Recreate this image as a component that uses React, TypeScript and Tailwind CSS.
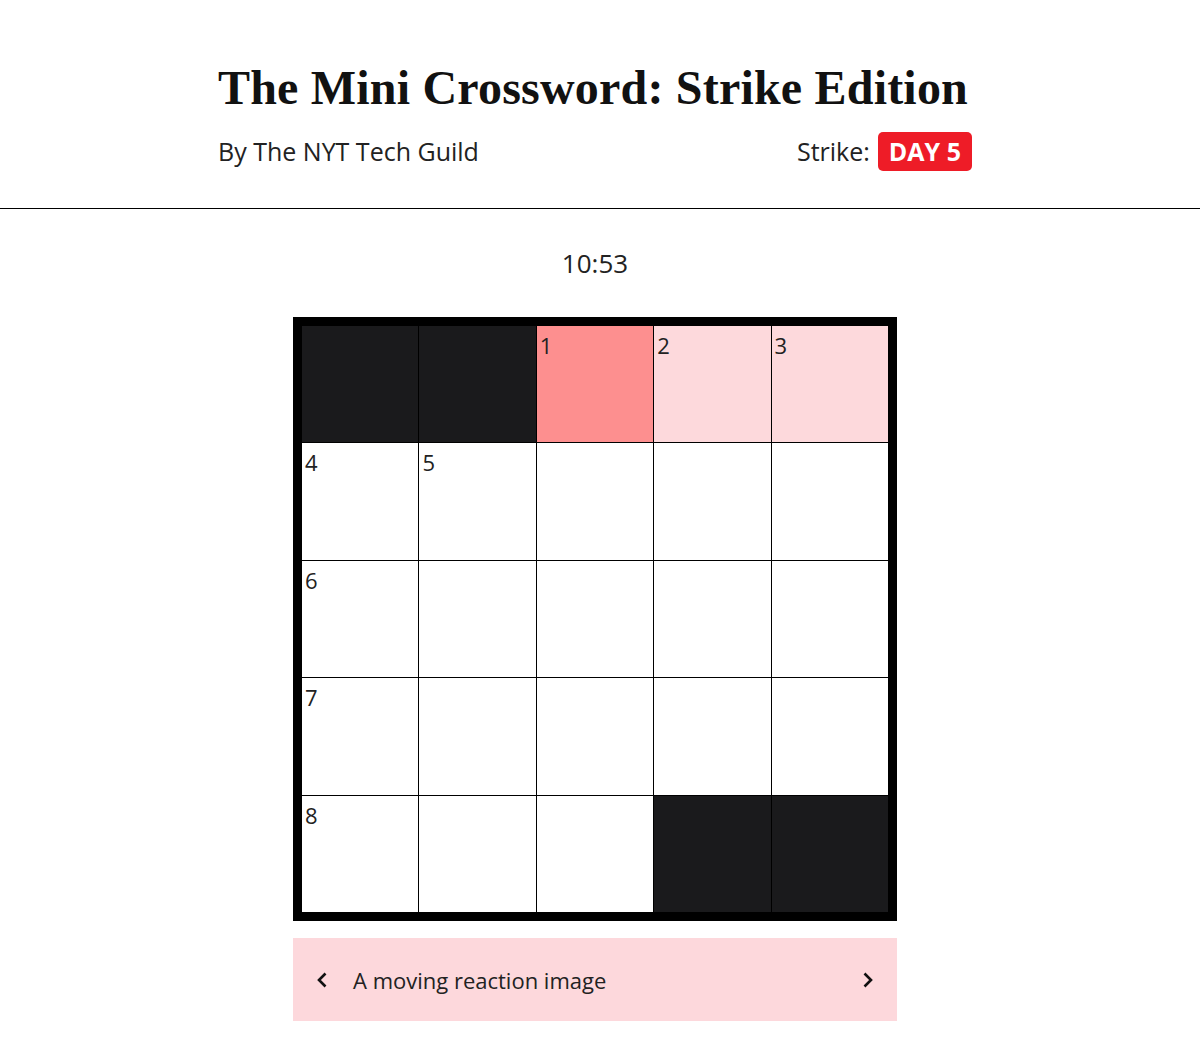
import React from "react";

const grid: (string | null | number)[][] = [
  ["B", "B", 1, 2, 3],
  [4, 5, "", "", ""],
  [6, "", "", "", ""],
  [7, "", "", "", ""],
  [8, "", "", "B", "B"],
];

export default function App() {
  return (
    <div className="min-h-[1046px] bg-white text-[#121212]" style={{ fontFamily: '"Open Sans", sans-serif' }}>
      <header className="border-b border-black">
        <div className="ml-[218px] w-[754px] pt-[60px] pb-[37px]">
          <h1
            className="text-[48px] font-bold leading-[56px] tracking-[0.2px] text-[#111]"
            style={{ fontFamily: '"Liberation Serif", "DejaVu Serif", serif' }}
          >
            The Mini Crossword: Strike Edition
          </h1>
          <div className="mt-[16px] flex items-center justify-between">
            <span className="text-[25px] leading-[39px] text-[#222]">By The NYT Tech Guild</span>
            <div className="flex items-center gap-[8px]">
              <span className="text-[25px] leading-[39px] text-[#222]">Strike:</span>
              <span className="h-[39px] rounded-[5px] bg-[#ee1c27] px-[11px] text-[25px] font-bold leading-[39px] text-white">
                DAY 5
              </span>
            </div>
          </div>
        </div>
      </header>
      <div className="flex flex-col items-center">
        <div className="mr-[10px] flex flex-col items-center">
          <div className="mt-[36px] text-[26px] leading-[36px] text-[#222]">10:53</div>
          <div className="mt-[36px] border-[9px] border-black bg-black">
            <div className="grid h-[586px] w-[586px] grid-cols-5 grid-rows-5 gap-px">
              {grid.flatMap((row, r) =>
                row.map((c, i) => {
                  let bg = "bg-white";
                  if (c === "B") bg = "bg-[#1a1a1c]";
                  else if (r === 0 && i === 2) bg = "bg-[#fd8f8f]";
                  else if (r === 0) bg = "bg-[#fdd9dc]";
                  return (
                    <div key={`${r}-${i}`} className={`${bg} relative`}>
                      {typeof c === "number" && (
                        <span className="absolute left-[3px] top-[5px] text-[22px] leading-[28px] text-[#222]">{c}</span>
                      )}
                    </div>
                  );
                })
              )}
            </div>
          </div>
          <div className="mt-[17px] flex h-[83px] w-[604px] items-center bg-[#fdd8dc] px-[22px]">
            <svg width="14" height="20" viewBox="0 0 14 20" className="mr-[24px]">
              <path d="M10.5 3.5 L4 10 L10.5 16.5" fill="none" stroke="#111" strokeWidth="2.6" />
            </svg>
            <span className="flex-1 text-[22px] leading-[30px] text-[#222]">A moving reaction image</span>
            <svg width="14" height="20" viewBox="0 0 14 20">
              <path d="M3.5 3.5 L10 10 L3.5 16.5" fill="none" stroke="#111" strokeWidth="2.6" />
            </svg>
          </div>
        </div>
      </div>
    </div>
  );
}
